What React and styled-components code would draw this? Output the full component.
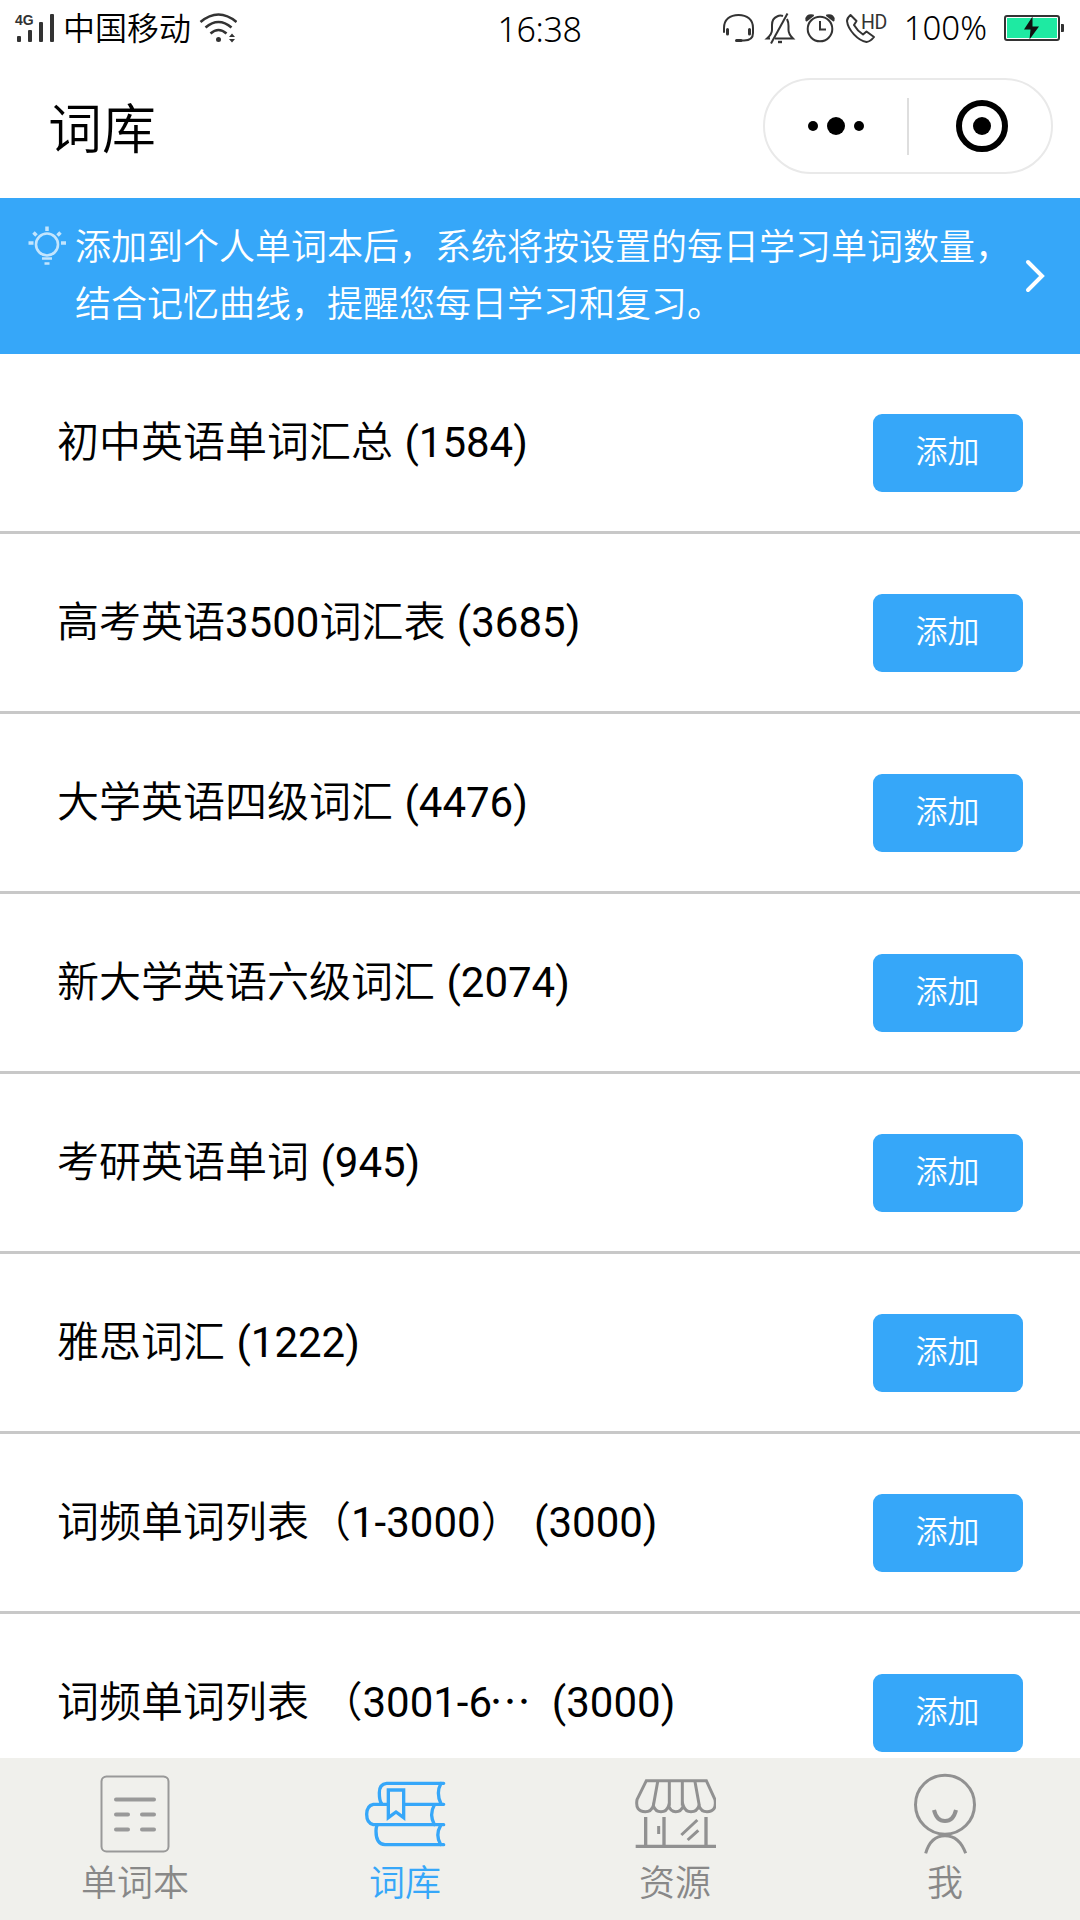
import React from "react";
import styled, { createGlobalStyle } from "styled-components";

const BLUE = "#36a7f9";
const CJK = '"Noto Sans CJK SC DemiLight", "Noto Sans CJK SC"';

const GlobalStyle = createGlobalStyle`
  * {
    box-sizing: border-box;
  }

  body {
    margin: 0;
    background: #fff;
    color: #000;
    font-family: Roboto, ${CJK}, sans-serif;
    font-weight: 400;
  }

  svg {
    display: block;
    flex: none;
  }
`;

const Screen = styled.div`
  width: 1080px;
  height: 1920px;
  display: flex;
  flex-direction: column;
  overflow: hidden;
  background: #fff;
`;

const StatusBar = styled.div`
  flex: none;
  height: 56px;
  padding: 0 15px 0 14px;
  display: grid;
  grid-template-columns: 1fr auto 1fr;
  align-items: center;
  line-height: 56px;
`;

const StatusGroup = styled.div`
  height: 56px;
  display: flex;
  align-items: center;
  justify-content: ${({ $end }) => ($end ? "flex-end" : "flex-start")};
`;

const StatusIcons = styled.div`
  display: flex;
  align-items: center;
  gap: 8px;
`;

const Carrier = styled.span`
  margin: 0 8px 0 6px;
  padding-top: 1px;
  font-size: 32px;
`;

const Clock = styled.span`
  font-family: "Noto Sans", sans-serif;
  font-size: 34px;
  font-weight: 350;
  letter-spacing: -0.4px;
  padding-top: 1px;
`;

const BatteryLevel = styled.span`
  font-family: "Noto Sans", sans-serif;
  font-size: 33px;
  font-weight: 350;
  height: 56px;
  line-height: 54px;
  margin: 0 17px 0 14px;
`;

const Header = styled.header`
  flex: none;
  height: 142px;
  padding: 8px 27px 8px 48px;
  display: flex;
  align-items: center;
  justify-content: space-between;
`;

const Title = styled.h1`
  margin: 0;
  font-size: 54px;
  line-height: 80px;
  font-weight: 400;
  padding-top: 7px;
`;

const Capsule = styled.div`
  width: 290px;
  height: 96px;
  margin-top: -2px;
  border: 2px solid #e9e9e9;
  border-radius: 48px;
  display: flex;
  align-items: center;
`;

const CapsuleButton = styled.div`
  width: 142px;
  display: flex;
  align-items: center;
  justify-content: center;
  gap: 9px;
  padding: ${({ $inset }) => $inset || 0};
`;

const CapsuleDivider = styled.div`
  width: 2px;
  height: 57px;
  background: #dedede;
`;

const Dot = styled.span`
  width: ${({ size }) => size}px;
  height: ${({ size }) => size}px;
  border-radius: 50%;
  background: #000;
`;

const Ring = styled.span`
  width: 52px;
  height: 52px;
  border: 6px solid #000;
  border-radius: 50%;
  display: flex;
  align-items: center;
  justify-content: center;
`;

const Notice = styled.div`
  flex: none;
  height: 156px;
  padding: 19px 35px 0 28px;
  display: flex;
  background: ${BLUE};
  color: #fff;
`;

const NoticeText = styled.p`
  flex: 1;
  margin: 0 0 0 8px;
  padding-top: 3px;
  font-size: 36px;
  line-height: 57px;
  white-space: pre;
`;

const BulbWrap = styled.div`
  padding-top: 9px;
`;

const ChevronWrap = styled.div`
  padding-top: 42px;
`;

const List = styled.ul`
  flex: 1;
  min-height: 0;
  margin: 0;
  padding: 0;
  overflow: hidden;
  list-style-type: none;
`;

const Row = styled.li`
  height: 180px;
  padding: 0 57px;
  display: flex;
  justify-content: space-between;
  border-bottom: 3px solid #c8c8c8;
`;

const BookName = styled.span`
  padding-top: 59px;
  font-size: 42px;
  line-height: 60px;
  word-spacing: 1px;
  white-space: pre;
`;

const Ellipsis = styled.span`
  font-family: ${CJK}, sans-serif;
  line-height: 1;
  margin: 0 -1px 0 -3px;
`;

const AddButton = styled.button`
  width: 150px;
  height: 78px;
  margin: 60px 0 0;
  padding: 0 1px 9px 0;
  border: 0;
  border-radius: 9px;
  background: ${BLUE};
  color: #fff;
  font-family: inherit;
  font-size: 32px;
`;

const TabBar = styled.nav`
  flex: none;
  height: 162px;
  display: grid;
  grid-template-columns: repeat(4, 1fr);
  background: #f0f0ec;
`;

const Tab = styled.div`
  display: flex;
  flex-direction: column;
  align-items: center;
  color: ${({ $active }) => ($active ? BLUE : "#888")};
`;

const TabIcon = styled.div`
  height: 90px;
  margin-top: 11px;
  display: flex;
  align-items: center;
`;

const TabLabel = styled.span`
  padding-top: 2px;
  font-size: 36px;
  line-height: 46px;
`;

const SignalIcon = () => (
  <svg width="43" height="56" viewBox="14 0 43 56" fill="#333">
    <text x="15" y="24" fontFamily="Liberation Sans" fontSize="14" fontWeight="700">
      4G
    </text>
    <rect x="17" y="35" width="4" height="6" rx="1" />
    <rect x="28" y="29" width="4" height="12" rx="1" />
    <rect x="39" y="21" width="4" height="20" rx="1" />
    <rect x="50" y="13" width="4" height="28" rx="1" />
  </svg>
);

const WifiIcon = () => (
  <svg width="38" height="56" viewBox="199 0 38 56" fill="none" stroke="#333" strokeWidth="2.6">
    <path d="M200.5 21Q218.5 6 236.5 21M205.5 26.5Q218.5 15.5 231.5 26.5M210.5 32.5Q218.5 25.5 226.5 32.5" />
    <circle cx="218.5" cy="38.5" r="2.5" fill="#333" stroke="none" />
    <path d="M229 36l3-3.5 3 3.5zM229 38l3 3.5 3-3.5z" fill="#333" stroke="none" />
  </svg>
);

const HeadsetIcon = () => (
  <svg width="34" height="56" viewBox="722 0 34 56" fill="none" stroke="#333" strokeWidth="2" strokeLinecap="round">
    <path d="M724 31V27C724 18.5 730 14 738.5 14S753 18.5 753 27V32Q753 39.5 744 39.5H737" />
    <path d="M727.5 28.5V33M749.5 28.5V33" strokeWidth="3" />
    <path d="M736.5 39.5H741" strokeWidth="3" />
  </svg>
);

const MutedBellIcon = () => (
  <svg width="32" height="56" viewBox="764 0 32 56" fill="none" stroke="#333" strokeWidth="2">
    <path d="M783 15Q780 14 777 15.5Q772 17.5 772 24V29Q772 33 767 37.5H770M787 18Q788.5 21 788.5 25V29Q788.5 33 793 37.5H775" />
    <path d="M787.5 12.5L771 42.5" />
    <path d="M778 41H782" strokeWidth="2.4" />
  </svg>
);

const AlarmIcon = () => (
  <svg width="32" height="56" viewBox="804 0 32 56" fill="none" stroke="#333" strokeWidth="2">
    <circle cx="820" cy="28" r="12.3" />
    <path d="M820 20V28.5H826" />
    <path d="M806.5 19.5Q805.5 13.5 813 14.5ZM833.5 19.5Q834.5 13.5 827 14.5Z" fill="#333" strokeLinejoin="round" />
  </svg>
);

const HdCallIcon = () => (
  <svg width="46" height="56" viewBox="845 0 46 56" fill="none" stroke="#333" strokeWidth="2" strokeLinejoin="round">
    <path d="M851.5 14Q848 17 848 20C849 29 859 39.5 867.5 41Q871.5 40.5 875 36L867.5 30.5L864 33.5Q858.5 30 855 24L857.5 20Z" />
    <text x="862" y="27.5" fontFamily="Roboto" fontSize="19.5" letterSpacing="-0.5" fill="#333" stroke="none">
      HD
    </text>
  </svg>
);

const BatteryIcon = () => (
  <svg width="61" height="56" viewBox="1004 0 61 56">
    <rect x="1005" y="15" width="54" height="24" rx="2" fill="#fff" stroke="#333" strokeWidth="2" />
    <rect x="1007" y="17" width="50" height="20" fill="#1eeaa2" />
    <path d="M1061 23h2q1 0 1 1v6q0 1-1 1h-2z" fill="#333" />
    <path d="M1032.5 15.5L1024 28.5H1030.5L1029.5 38.5L1039 25.5H1032.5Z" fill="#111" />
  </svg>
);

const BulbIcon = () => (
  <svg width="39" height="40" viewBox="28 226 39 40" fill="none" stroke="#fff" strokeOpacity="0.7" strokeWidth="2.6">
    <circle cx="47" cy="244.5" r="11" />
    <path d="M47 226.5V231M28.5 243H33.5M61 243H66M33.5 232.5L36.5 235.5M60.5 232.5L57.5 235.5" strokeWidth="3.5" />
    <path d="M42 258.5H52M44.5 263.5H49.5" />
  </svg>
);

const ChevronIcon = () => (
  <svg width="20" height="34" viewBox="1025 259 20 34" fill="none" stroke="#fff" strokeWidth="4" strokeLinecap="round">
    <path d="M1028 262L1042 276L1028 290" />
  </svg>
);

const NotebookIcon = () => (
  <svg width="70" height="78" viewBox="0 0 70 78" fill="none" stroke="#999">
    <rect x="1.5" y="1.5" width="67" height="75" rx="5" strokeWidth="2" />
    <path d="M16 24.5H54M16 39.5H28M42 39.5H54M16 54.5H28M42 54.5H54" strokeWidth="4" strokeLinecap="round" />
  </svg>
);

const BooksIcon = () => (
  <svg width="81" height="66" viewBox="0 0 243 198" fill="none" stroke={BLUE} strokeWidth="10" strokeLinecap="round">
    <path d="M236 7H65Q43 9 43 35Q43 60 50 68M228 7Q212 37 228 68" />
    <path d="M236 70H119M66 70H25Q5 74 5 100Q5 127 25 131H236M208 72Q192 100 208 131" />
    <path d="M236 191H60Q33 190 33 150Q33 140 36 133M227 133Q210 162 227 191" />
    <path d="M70 27H116V110L93 93L70 110Z" strokeLinecap="butt" />
  </svg>
);

const ShopIcon = () => (
  <svg width="82" height="70" viewBox="-3 0 246 210" fill="none" stroke="#919191" strokeWidth="9">
    <path d="M34 5H214L240 62Q246 98 216 98Q198 98 192 80Q186 98 168 98Q151 98 145 80Q139 98 122 98Q106 98 101 80Q95 98 78 98Q61 98 55 80Q49 98 31 98Q0 98 6 62Z" />
    <path d="M68 8L55 80M103 8V80M142 8V80M180 8L193 80" />
    <path d="M32 114V202M87 114V202M213 114V202M2 202H243" strokeWidth="10" />
    <path d="M71 141V165M139 168L187 123M158 183L190 154" strokeWidth="9" />
  </svg>
);

const PersonIcon = () => (
  <svg width="62" height="82" viewBox="0 0 186 246" fill="none" stroke="#919191" strokeWidth="9">
    <circle cx="93" cy="95" r="88.5" />
    <path d="M60 111Q68 144 93 144T126 111" strokeWidth="12" />
    <path d="M35 241Q50 188 93 188T155 241" />
  </svg>
);

const books = [
  { name: "初中英语单词汇总", count: 1584 },
  { name: "高考英语3500词汇表", count: 3685 },
  { name: "大学英语四级词汇", count: 4476 },
  { name: "新大学英语六级词汇", count: 2074 },
  { name: "考研英语单词", count: 945 },
  { name: "雅思词汇", count: 1222 },
  { name: "词频单词列表（1-3000）", count: 3000 },
  { name: "词频单词列表 （3001-6", count: 3000, truncated: true }
];

const tabs = [
  { label: "单词本", Icon: NotebookIcon },
  { label: "词库", Icon: BooksIcon, active: true },
  { label: "资源", Icon: ShopIcon },
  { label: "我", Icon: PersonIcon }
];

const BookRow = ({ name, count, truncated }) => (
  <Row>
    <BookName>
      {name}
      {truncated && <Ellipsis>… </Ellipsis>}
      {` (${count})`}
    </BookName>
    <AddButton>添加</AddButton>
  </Row>
);

const App = () => (
  <>
    <GlobalStyle />
    <Screen>
      <StatusBar>
        <StatusGroup>
          <SignalIcon />
          <Carrier>中国移动</Carrier>
          <WifiIcon />
        </StatusGroup>
        <Clock>16:38</Clock>
        <StatusGroup $end>
          <StatusIcons>
            <HeadsetIcon />
            <MutedBellIcon />
            <AlarmIcon />
            <HdCallIcon />
          </StatusIcons>
          <BatteryLevel>100%</BatteryLevel>
          <BatteryIcon />
        </StatusGroup>
      </StatusBar>
      <Header>
        <Title>词库</Title>
        <Capsule>
          <CapsuleButton>
            <Dot size={10} />
            <Dot size={18} />
            <Dot size={10} />
          </CapsuleButton>
          <CapsuleDivider />
          <CapsuleButton $inset="0 0 0 3px">
            <Ring>
              <Dot size={18} />
            </Ring>
          </CapsuleButton>
        </Capsule>
      </Header>
      <Notice>
        <BulbWrap>
          <BulbIcon />
        </BulbWrap>
        <NoticeText>
          {"添加到个人单词本后，系统将按设置的每日学习单词数量，\n结合记忆曲线，提醒您每日学习和复习。"}
        </NoticeText>
        <ChevronWrap>
          <ChevronIcon />
        </ChevronWrap>
      </Notice>
      <List>
        {books.map(book => (
          <BookRow key={book.name} {...book} />
        ))}
      </List>
      <TabBar>
        {tabs.map(({ label, Icon, active }) => (
          <Tab key={label} $active={active}>
            <TabIcon>
              <Icon />
            </TabIcon>
            <TabLabel>{label}</TabLabel>
          </Tab>
        ))}
      </TabBar>
    </Screen>
  </>
);

export default App;
